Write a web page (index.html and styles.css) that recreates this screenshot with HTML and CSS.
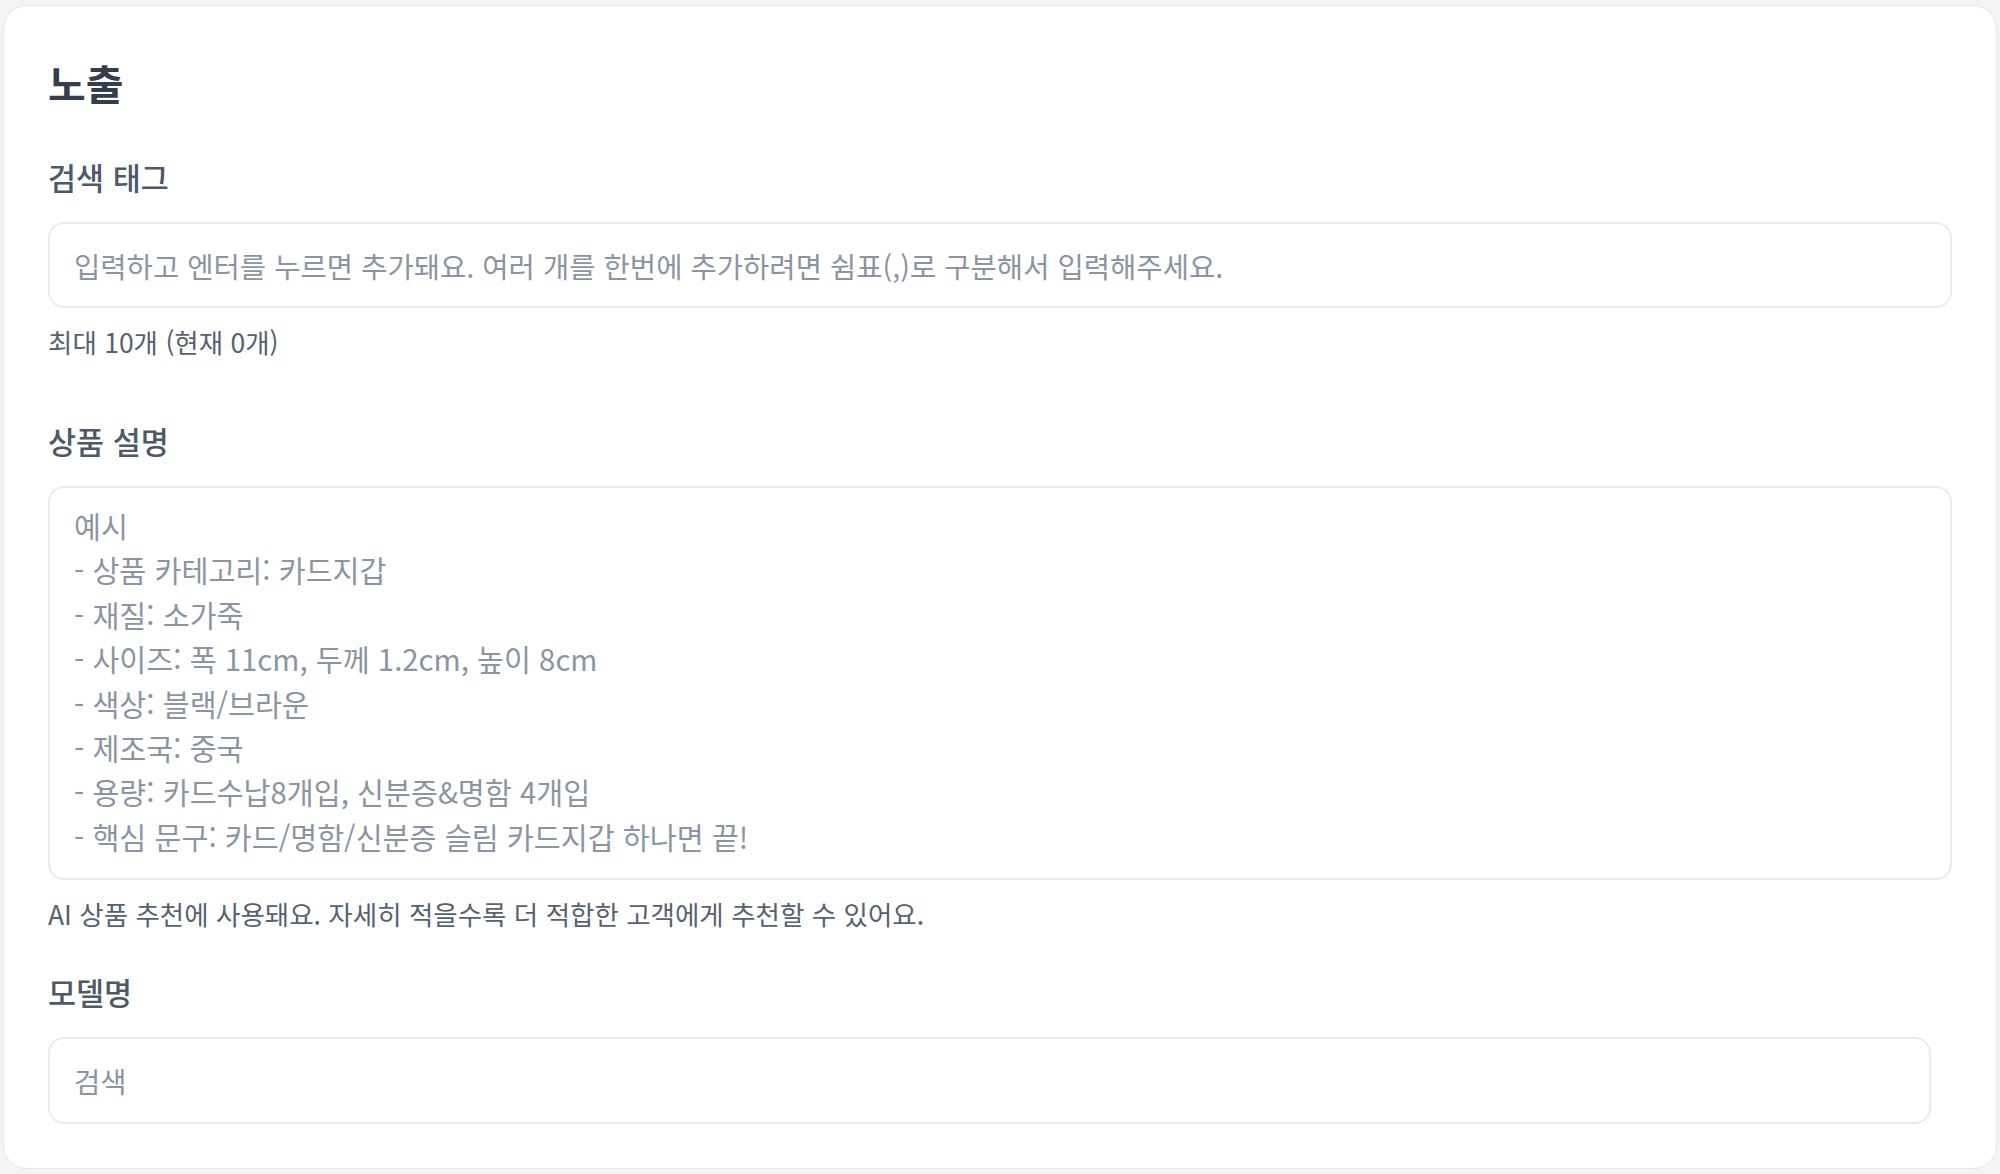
FILE: index.html
```html
<!DOCTYPE html>
<html lang="ko">
<head>
<meta charset="utf-8">
<title>노출</title>
<link rel="stylesheet" href="styles.css">
</head>
<body>
<div class="page">
  <section class="card">
    <h2 class="card-title">노출</h2>

    <div class="field field-tags">
      <label class="field-label" for="tags">검색 태그</label>
      <input id="tags" class="text-input" type="text" placeholder="입력하고 엔터를 누르면 추가돼요. 여러 개를 한번에 추가하려면 쉼표(,)로 구분해서 입력해주세요.">
      <p class="field-help">최대 10개 (현재 0개)</p>
    </div>

    <div class="field field-desc">
      <label class="field-label" for="desc">상품 설명</label>
      <textarea id="desc" class="text-area" placeholder="예시&#10;- 상품 카테고리: 카드지갑&#10;- 재질: 소가죽&#10;- 사이즈: 폭 11cm, 두께 1.2cm, 높이 8cm&#10;- 색상: 블랙/브라운&#10;- 제조국: 중국&#10;- 용량: 카드수납8개입, 신분증&amp;명함 4개입&#10;- 핵심 문구: 카드/명함/신분증 슬림 카드지갑 하나면 끝!"></textarea>
      <p class="field-help">AI 상품 추천에 사용돼요. 자세히 적을수록 더 적합한 고객에게 추천할 수 있어요.</p>
    </div>

    <div class="field field-model">
      <label class="field-label" for="model">모델명</label>
      <div class="search-row">
        <input id="model" class="text-input" type="text" placeholder="검색">
      </div>
    </div>
  </section>
</div>
</body>
</html>
```

FILE: styles.css
```css
* { box-sizing: border-box; }

html, body {
  margin: 0;
  padding: 0;
  background: #f2f4f6;
  font-family: "Noto Sans CJK KR", "Noto Sans", sans-serif;
}

.page {
  padding: 5px 3px;
}

.card {
  background: #ffffff;
  border: 1px solid #e5e8eb;
  border-radius: 24px;
  padding: 47px 44px 44px;
}

.card-title {
  margin: 0;
  font-size: 41px;
  line-height: 58px;
  font-weight: 700;
  color: #333d4b;
}

.field { display: flex; flex-direction: column; }
.field-tags { margin-top: 45px; }
.field-desc { margin-top: 60px; }
.field-model { margin-top: 39px; }

.field-label {
  display: block;
  font-size: 30.5px;
  line-height: 42px;
  font-weight: 500;
  color: #4e5968;
  margin-bottom: 24px;
}

.text-input,
.text-area {
  width: 100%;
  border: 2px solid #e8ebee;
  border-radius: 16px;
  background: #ffffff;
  font-family: inherit;
  color: #333d4b;
  outline: none;
  padding: 0 24px;
}

.text-input {
  height: 86px;
  font-size: 28.6px;
  line-height: 40px;
}

.text-area {
  height: 394px;
  padding: 15px 24px 16px;
  font-size: 29.3px;
  line-height: 44.4px;
  resize: none;
  overflow: hidden;
  display: block;
}

.text-input::placeholder,
.text-area::placeholder {
  color: #8b95a1;
  opacity: 1;
}

.field-help {
  margin: 16px 0 0;
  font-size: 26.5px;
  line-height: 36px;
  color: #566270;
}

.search-row {
  padding-right: 21px;
}

.search-row .text-input {
  height: 87px;
}
```
